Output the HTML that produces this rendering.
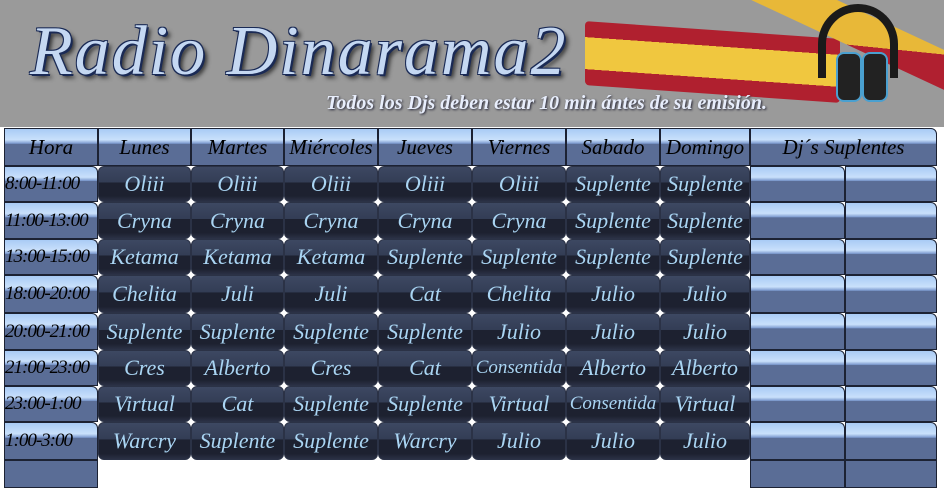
<!DOCTYPE html><html><head><style>
*{margin:0;padding:0}
body{width:944px;height:494px;background:#fff;position:relative;overflow:hidden;font-family:"Liberation Serif",serif}
#hd{position:absolute;left:0;top:0;width:944px;height:127px;background:#9a9a9a}
.c{position:absolute;box-sizing:border-box;display:flex;align-items:center;justify-content:center;font-style:italic;white-space:nowrap;overflow:hidden}
.d{background:linear-gradient(#3d4862 0%,#333d55 45%,#1d2130 46%,#1d2130 85%,#2a3044 100%);color:#a9d4f2;font-size:22px;border-radius:6px;border:1px solid #2b3246}
.l{background:linear-gradient(#a9cbf5 0%,#c9e0fb 30%,#7d9bd0 40%,#5a6d96 42%,#5a6d96 100%);color:#000;font-size:20px;border:1px solid #1c2233;border-radius:0 6px 0 0}
.h{background:linear-gradient(#a9cbf5 0%,#c9e0fb 30%,#7d9bd0 40%,#5a6d96 42%,#5a6d96 100%);color:#000;font-size:21px;border:1px solid #1c2233}
</style></head><body>
<div id="hd">
<div style="position:absolute;left:30px;top:12px;font:italic 70px 'Liberation Serif',serif;color:#c5d8f2;text-shadow:2px 2px 0 #1a2a55,-1px -1px 0 #1a2a55,1px -1px 0 #1a2a55,-1px 1px 0 #1a2a55,4px 4px 4px #333;letter-spacing:2px">Radio Dinarama2</div>
<div style="position:absolute;left:585px;top:30px;width:255px;height:64px;background:linear-gradient(#b0202f 0 25%,#f0c73f 25% 75%,#b0202f 75%);transform:skewY(4deg);border-radius:4px"></div>
<div style="position:absolute;left:730px;top:0px;width:214px;height:40px;background:linear-gradient(160deg,#c03040 0 30%,#e8b838 30% 70%,#b02030 70%);transform:skewY(25deg)"></div>
<div style="position:absolute;left:818px;top:4px;width:80px;height:74px;border:8px solid #1a1a1a;border-bottom:none;border-radius:45px 45px 0 0;box-sizing:border-box"></div>
<div style="position:absolute;left:836px;top:52px;width:22px;height:46px;background:#222;border-radius:8px;border:2px solid #4aa0d0"></div>
<div style="position:absolute;left:862px;top:52px;width:22px;height:46px;background:#222;border-radius:8px;border:2px solid #4aa0d0"></div>
<div style="position:absolute;left:326px;top:92px;font:italic bold 20px 'Liberation Serif',serif;color:#e8eefc;text-shadow:1px 1px 2px #223;">Todos los Djs deben estar 10 min ántes de su emisión.</div>
</div>
<div id="t"></div>
<script>
var xs=[4,98,191,284,378,472,566,660,750,845,937];
var ys=[128,166,202,239,275,313,350,386,422,460];
var hdr=["Hora","Lunes","Martes","Miércoles","Jueves","Viernes","Sabado","Domingo"];
var times=["8:00-11:00","11:00-13:00","13:00-15:00","18:00-20:00","20:00-21:00","21:00-23:00","23:00-1:00","1:00-3:00"];
var data=[["Oliii","Oliii","Oliii","Oliii","Oliii","Suplente","Suplente"],["Cryna","Cryna","Cryna","Cryna","Cryna","Suplente","Suplente"],["Ketama","Ketama","Ketama","Suplente","Suplente","Suplente","Suplente"],["Chelita","Juli","Juli","Cat","Chelita","Julio","Julio"],["Suplente","Suplente","Suplente","Suplente","Julio","Julio","Julio"],["Cres","Alberto","Cres","Cat","Consentida","Alberto","Alberto"],["Virtual","Cat","Suplente","Suplente","Virtual","Consentida","Virtual"],["Warcry","Suplente","Suplente","Warcry","Julio","Julio","Julio"]];
var h="";
function c(cls,x,y,w,hh,t,st){h+='<div class="c '+cls+'" style="left:'+x+'px;top:'+y+'px;width:'+w+'px;height:'+hh+'px;'+(st||'')+'">'+t+'</div>';}
for(var i=0;i<8;i++)c("h",xs[i],128,xs[i+1]-xs[i],38,hdr[i]);
c("l",750,128,187,38,"Dj´s Suplentes","font-size:21px");
for(var r=0;r<8;r++){var y=ys[r+1],hh=ys[r+2]-y;
c("l",4,y,94,hh,times[r],"font-size:19px;letter-spacing:-1px;justify-content:flex-start");
for(var k=0;k<7;k++)c("d",xs[k+1],y,xs[k+2]-xs[k+1],hh,data[r][k],data[r][k]=="Consentida"?"font-size:19px":"");
c("l",750,y,95,hh,"");c("l",845,y,92,hh,"");}
c("h",4,460,94,28,"","background:#5a6d96");
c("h",750,460,95,28,"","background:#5a6d96");c("h",845,460,92,28,"","background:#5a6d96");
document.getElementById("t").innerHTML=h;
</script>
</body></html>
